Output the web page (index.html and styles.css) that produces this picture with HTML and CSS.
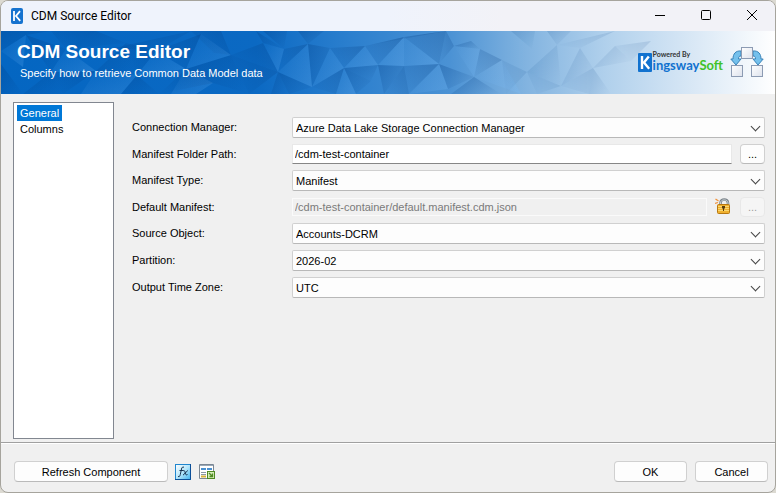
FILE: index.html
```html
<!DOCTYPE html>
<html lang="en">
<head>
  <meta charset="UTF-8">
  <meta name="viewport" content="width=device-width, initial-scale=1.0">
  <title>CDM Source Editor</title>
  <link rel="stylesheet" href="styles.css">
</head>
<body>
  <div class="window">
    <header class="titlebar">
      <svg class="app-icon" width="12" height="16" viewBox="0 0 12 16" aria-hidden="true">
        <rect width="12" height="16" rx="2" fill="#1673cf"/>
        <path d="M3 3v10M9 3.200L5 8l4.200 4.800" fill="none" stroke="#fff" stroke-width="1.800"/>
      </svg>
      <span class="titlebar-text">CDM Source Editor</span>
      <button class="win-btn" aria-label="Minimize">
        <svg width="12" height="12" viewBox="0 0 12 12"><path d="M1 6.5h10" stroke="#000" fill="none"/></svg>
      </button>
      <button class="win-btn" aria-label="Maximize">
        <svg width="12" height="12" viewBox="0 0 12 12"><rect x="1.5" y="1.5" width="9" height="9" rx="1" stroke="#000" fill="none"/></svg>
      </button>
      <button class="win-btn" aria-label="Close">
        <svg width="12" height="12" viewBox="0 0 12 12"><path d="M1 1l10 10M11 1L1 11" stroke="#000" fill="none"/></svg>
      </button>
    </header>

    <div class="banner">
      <svg class="banner-art" viewBox="0 0 774 63" preserveAspectRatio="none" aria-hidden="true">
        <defs>
          <linearGradient id="base">
            <stop offset="0" stop-color="#0466c2"/>
            <stop offset=".33" stop-color="#0b69c3"/>
            <stop offset=".45" stop-color="#2b7fce"/>
            <stop offset=".58" stop-color="#4b92d4"/>
            <stop offset=".67" stop-color="#7eb1df"/>
            <stop offset=".78" stop-color="#b0d0ec"/>
            <stop offset=".9" stop-color="#dbe9f6"/>
            <stop offset="1" stop-color="#ffffff"/>
          </linearGradient>
          <linearGradient id="dark" x1="0" y1="0" x2="1" y2="1">
            <stop offset="0" stop-color="#003a80" stop-opacity=".28"/>
            <stop offset="1" stop-color="#003a80" stop-opacity="0"/>
          </linearGradient>
          <linearGradient id="darkr" x1="1" y1="0" x2="0" y2="1">
            <stop offset="0" stop-color="#003a80" stop-opacity=".26"/>
            <stop offset="1" stop-color="#003a80" stop-opacity="0"/>
          </linearGradient>
          <linearGradient id="lite" x1="0" y1="0" x2="1" y2="1">
            <stop offset="0" stop-color="#7cc0ff" stop-opacity="0"/>
            <stop offset="1" stop-color="#7cc0ff" stop-opacity=".2"/>
          </linearGradient>
        </defs>
        <rect width="774" height="63" fill="url(#base)"/>
        <!-- left facets -->
        <g fill="url(#dark)">
          <path d="M0 20L25 4L50 0H0z"/><path d="M25 4L65 18L50 41z"/><path d="M65 18L125 12L95 0z"/><path d="M0 33L22 63H0z"/><path d="M50 41L22 63H62z"/><path d="M95 40L125 12L136 44z"/><path d="M113 17L190 0L155 20z"/><path d="M136 44L120 63H158z"/><path d="M185 38L230 24L248 63L212 52z"/><path d="M255 0L283 18L262 12z"/>
        </g>
        <g fill="url(#darkr)">
          <path d="M50 0L95 0L65 18z"/><path d="M50 41L95 40L62 63z"/><path d="M125 12L155 20L136 44z"/><path d="M155 20L200 3L185 38z"/><path d="M158 63L185 38L212 52z"/><path d="M190 0L213 22L230 24L220 0z"/><path d="M230 24L262 12L277 41z"/><path d="M230 24L277 41L248 63z"/>
        </g>
        <g fill="url(#lite)">
          <path d="M0 20L25 4L22 36z"/><path d="M65 18L95 40L50 41z"/><path d="M95 40L136 44L120 63L80 63z"/><path d="M155 20L185 38L136 44z"/><path d="M200 3L230 24L185 38z"/><path d="M185 38L212 52L195 63H170z"/><path d="M262 12L283 18L277 41z"/>
        </g>
        <!-- middle facets -->
        <g fill="url(#dark)">
          <path d="M262 0L283 18L286 0z"/><path d="M297 0L307 13L323 0z"/><path d="M307 13L329 17L311 56z"/><path d="M277 41L288 63H270z"/><path d="M277 41L311 56L288 63z"/><path d="M343 37L377 34L370 50z"/><path d="M343 37L370 50L355 63z"/><path d="M377 34L403 35L383 63z"/><path d="M438 33L473 46L447 58z"/><path d="M473 46L500 63H450z"/><path d="M453 15L479 18L470 10z"/>
        </g>
        <g fill="url(#darkr)">
          <path d="M283 18L307 13L277 41z"/><path d="M329 17L364 15L343 37z"/><path d="M364 15L403 6L377 34z"/><path d="M364 15L445 0L403 6z"/><path d="M403 6L445 0L438 33z"/><path d="M403 35L438 33L408 63z"/><path d="M403 35L408 63H383z"/><path d="M438 33L445 0L453 15z"/><path d="M343 37L335 63L311 56z"/><path d="M479 18L501 29L473 46z"/>
        </g>
        <g fill="url(#lite)">
          <path d="M307 13L311 56L277 41z"/><path d="M329 17L343 37L311 56z"/><path d="M364 15L377 34L343 37z"/><path d="M403 6L438 33L403 35z"/><path d="M403 6V35L377 34z"/><path d="M438 33L447 58L408 63z"/><path d="M453 15L479 18L473 46z"/><path d="M501 29L520 63L473 46z"/><path d="M343 37L355 63H335z"/>
        </g>
        <!-- faded facets on the right -->
        <g fill="url(#dark)" opacity=".5">
          <path d="M510 0L534 0L531 18z"/><path d="M546 0L556 14L570 0z"/><path d="M556 14L560 55L526 41z"/><path d="M579 17L592 37L560 55z"/><path d="M592 37L614 15L630 30z"/><path d="M592 37L610 63H588z"/>
        </g>
        <g fill="url(#darkr)" opacity=".5">
          <path d="M556 14L579 17L614 0z"/><path d="M501 29L526 41L505 63z"/><path d="M526 41L560 55L536 63z"/><path d="M592 37L588 63L560 55z"/><path d="M614 15L650 10L630 30z"/>
        </g>
      </svg>
      <div class="banner-text">
        <h1>CDM Source Editor</h1>
        <p>Specify how to retrieve Common Data Model data</p>
      </div>
      <div class="brand">
        <svg width="14" height="19" viewBox="0 0 14 19" aria-hidden="true">
          <rect width="14" height="19" rx="1" fill="#1172cf"/>
          <path d="M4 3v13M10.8 3.4L6 9.5l5.2 6.2" fill="none" stroke="#fff" stroke-width="2.4"/>
        </svg>
        <div class="brand-text">
          <span class="powered">Powered By</span>
          <span class="brand-name">ingsway<span class="soft">Soft</span></span>
        </div>
      </div>
      <svg class="flow-icon" width="34" height="32" viewBox="0 0 34 32" aria-hidden="true">
        <defs>
          <linearGradient id="box" x1="0" y1="0" x2="1" y2="1">
            <stop offset="0" stop-color="#fff"/>
            <stop offset="1" stop-color="#dde2ec"/>
          </linearGradient>
        </defs>
        <path id="arrow" d="M11 4C5.500 3.500 3 7 3 12H.8L6 18l5-6H8.500C8.500 10 9 9 11 9z" fill="#74c0ec" stroke="#3a83b8"/>
        <use href="#arrow" transform="matrix(-1 0 0 1 34 0)"/>
        <g fill="url(#box)" stroke="#8c9bb3">
          <rect x="11.500" y=".5" width="11" height="11"/>
          <rect x="1.500" y="18.500" width="11" height="11"/>
          <rect x="21.500" y="18.500" width="11" height="11"/>
        </g>
      </svg>
    </div>

    <main class="content">
      <nav class="pages" aria-label="Pages">
        <a class="page active" href="#general">General</a>
        <a class="page" href="#columns">Columns</a>
      </nav>

      <form class="settings" id="general">
        <div class="row">
          <label for="connection">Connection Manager:</label>
          <div class="combo">
            <select id="connection"><option>Azure Data Lake Storage Connection Manager</option></select>
          </div>
        </div>
        <div class="row short">
          <label for="folder">Manifest Folder Path:</label>
          <input class="text" id="folder" type="text" value="/cdm-test-container">
          <button class="btn browse" type="button" aria-label="Browse folder">...</button>
        </div>
        <div class="row">
          <label for="type">Manifest Type:</label>
          <div class="combo">
            <select id="type"><option>Manifest</option></select>
          </div>
        </div>
        <div class="row short">
          <label for="manifest">Default Manifest:</label>
          <input class="text" id="manifest" type="text" value="/cdm-test-container/default.manifest.cdm.json" disabled>
          <button class="icon-btn" type="button" aria-label="Unlock">
            <svg width="16" height="16" viewBox="0 0 16 16">
              <path d="M5.500 8V5C5.500 .3 13 .3 13 5V8" fill="none" stroke="#7d868c" stroke-width="2.600"/>
              <path d="M5.500 7V5C5.500 .8 13 .8 13 5V7" fill="none" stroke="#c9d0d4"/>
              <path d="M.5 1l3 2M0 5.500l3-1" stroke="#f0913a" stroke-width="1.300"/>
              <rect x="2.500" y="6.500" width="12" height="9" rx="1" fill="#efb02e" stroke="#b87810"/>
              <path d="M3 8.500h11M3 10.500h11M3 12.500h11" stroke="#fbd770"/>
              <path d="M7 8h3v2.500H9V13H8v-2.500H7z" fill="#5a3d0c"/>
            </svg>
          </button>
          <button class="btn browse" type="button" aria-label="Browse manifest" disabled>...</button>
        </div>
        <div class="row">
          <label for="source">Source Object:</label>
          <div class="combo">
            <select id="source"><option>Accounts-DCRM</option></select>
          </div>
        </div>
        <div class="row">
          <label for="partition">Partition:</label>
          <div class="combo">
            <select id="partition"><option>2026-02</option></select>
          </div>
        </div>
        <div class="row">
          <label for="timezone">Output Time Zone:</label>
          <div class="combo">
            <select id="timezone"><option>UTC</option></select>
          </div>
        </div>
      </form>
    </main>

    <footer class="footer">
      <button class="btn refresh" type="button">Refresh Component</button>
      <div class="tools">
        <button class="icon-btn" type="button" aria-label="Expressions">
          <svg width="16" height="16" viewBox="0 0 16 16">
            <defs>
              <linearGradient id="fx" x1="0" y1="0" x2="1" y2="1">
                <stop offset="0" stop-color="#fff"/>
                <stop offset=".5" stop-color="#b5e6fb"/>
                <stop offset="1" stop-color="#3fb2ee"/>
              </linearGradient>
            </defs>
            <rect x=".5" y=".5" width="15" height="15" fill="url(#fx)" stroke="#1f86cf"/>
            <path d="M15.500 0v15.500H0" fill="none" stroke="#0c4f98"/>
            <path d="M3 12.500c1.500.5 2-.5 2.300-2L6.500 5C6.800 3.300 7.500 2.800 9 3.200M4.500 6.500h3.500" fill="none" stroke="#16314f"/>
            <path d="M8 6.800c1.500-.8 1.800.2 2.200 2s.8 2.600 2.300 1.700M12.800 6.500L8 11.200" fill="none" stroke="#16314f"/>
          </svg>
        </button>
        <button class="icon-btn" type="button" aria-label="Documentation">
          <svg width="16" height="16" viewBox="0 0 16 16">
            <path d="M.5.5h14v14H.5z" fill="#fff" stroke="#7b8794"/>
            <path d="M1 1.500h13" stroke="#9aa8b6"/>
            <path d="M2 5h5M8 5h5" stroke="#4a90d0" stroke-width="2"/>
            <path d="M2 8.500h5M2 10.500h5" stroke="#8a97a4"/>
            <path d="M2 12.500h5" stroke="#d6b23c" stroke-width="2"/>
            <rect x="8.500" y="7.500" width="7" height="7" fill="#d5ecb8" stroke="#4f8a22"/>
            <path d="M10 9l3.500 3.500M13.500 9.500v3H10.500" fill="none" stroke="#4f8a22" stroke-width="1.300"/>
          </svg>
        </button>
      </div>
      <div class="actions">
        <button class="btn action" type="button">OK</button>
        <button class="btn action" type="button">Cancel</button>
      </div>
    </footer>
  </div>
</body>
</html>
```
FILE: styles.css
```css
* {
  box-sizing: border-box;
}
body {
  margin: 0;
  background: #dcdad2;
  color: #000;
  font-family: "Liberation Sans", Arial, sans-serif;
  font-size: 11px;
  line-height: 16px;
}
button, input, select {
  font: inherit;
  color: inherit;
}
.window {
  display: flex;
  flex-direction: column;
  min-height: 100vh;
  background: #f0f0f0;
  border: 1px solid #a6a49d;
  border-radius: 8px;
  overflow: hidden;
}

/* title bar */
.titlebar {
  display: flex;
  align-items: center;
  height: 30px;
  padding-left: 10px;
  background: linear-gradient(90deg, #eff3fc 50%, #f2f2f7 65%);
}
.titlebar-text {
  flex: 1;
  margin-left: 8px;
  font-family: Roboto, "Segoe UI", sans-serif;
  font-size: 12px;
}
.win-btn {
  display: flex;
  align-items: center;
  justify-content: center;
  width: 46px;
  height: 30px;
  padding: 0 0 2px;
  border: none;
  background: none;
}

/* banner */
.banner {
  position: relative;
  display: flex;
  align-items: center;
  height: 63px;
  padding: 0 11px 0 16px;
}
.banner-art {
  position: absolute;
  inset: 0;
  width: 100%;
  height: 100%;
}
.banner-text {
  position: relative;
  flex: 1;
  padding-bottom: 4px;
  color: #fff;
}
.banner h1 {
  margin: 0;
  font-size: 19px;
  line-height: 24px;
}
.banner p {
  margin: 0 0 0 3px;
  line-height: 18px;
}
.brand {
  position: relative;
  display: flex;
  align-items: center;
  margin-right: 7px;
}
.brand-text {
  display: flex;
  flex-direction: column;
  padding-bottom: 2px;
  margin-left: 1px;
  font-family: Lato, sans-serif;
  font-weight: bold;
}
.powered {
  font-size: 7px;
  line-height: 8px;
  color: #333;
}
.brand-name {
  font-size: 13px;
  line-height: 15px;
  color: #1172cf;
}
.soft {
  color: #3fc229;
}
.flow-icon {
  position: relative;
}

/* content */
.content {
  display: flex;
  flex: 1;
  gap: 18px;
  padding: 8px 10px 3px 12px;
}
.pages {
  display: flex;
  flex-direction: column;
  align-items: flex-start;
  width: 101px;
  padding: 2px 3px;
  background: #fff;
  border: 1px solid #828790;
}
.page {
  padding: 0 3px;
  color: #000;
  text-decoration: none;
}
.page.active {
  background: #0078d7;
  color: #fff;
}
.settings {
  display: flex;
  flex: 1;
  flex-direction: column;
  gap: 6px;
  padding-top: 15px;
}
.row {
  display: flex;
  align-items: center;
  height: 21px;
}
.row.short {
  height: 20px;
}
.row label {
  width: 160px;
  padding-bottom: 1px;
}
.combo {
  position: relative;
  flex: 1;
}
.combo::after {
  content: "";
  position: absolute;
  top: 6px;
  right: 6px;
  width: 6px;
  height: 6px;
  border-right: 1px solid #444;
  border-bottom: 1px solid #444;
  transform: rotate(45deg);
  pointer-events: none;
}
.combo select {
  display: block;
  width: 100%;
  height: 21px;
  padding: 0 20px 0 3px;
  appearance: none;
  background: #fdfdfd;
  border: 1px solid #d0d0d0;
  border-bottom-color: #b8b8b8;
  border-radius: 2px;
}
.text {
  flex: 1;
  min-width: 0;
  height: 20px;
  padding: 0 2px;
  background: #fff;
  border: 1px solid #e8e8e8;
  border-bottom-color: #868686;
}
.text:disabled {
  height: 18px;
  background: #f0f0f0;
  border-color: #fafafa;
  color: #7a7a7a;
}
.btn {
  height: 21px;
  padding: 0;
  background: #fdfdfd;
  border: 1px solid #d0d0d0;
  border-bottom-color: #bababa;
  border-radius: 4px;
}
.btn:disabled {
  background: #f5f5f5;
  border-color: #e8e8e8;
  color: #9d9d9d;
}
.browse {
  width: 25px;
  height: 20px;
  margin-left: 8px;
}
.icon-btn {
  display: flex;
  padding: 0;
  border: none;
  background: none;
}
.row .icon-btn {
  margin: 0 1px 3px 8px;
}

/* footer */
.footer {
  display: flex;
  align-items: center;
  height: 50px;
  padding: 8px 7px 0 13px;
  border-top: 1px solid #a0a0a0;
  box-shadow: inset 0 1px #fff;
}
.refresh {
  width: 154px;
}
.tools {
  display: flex;
  gap: 8px;
  margin-left: 7px;
}
.actions {
  display: flex;
  gap: 8px;
  margin-left: auto;
}
.action {
  width: 73px;
}
```
